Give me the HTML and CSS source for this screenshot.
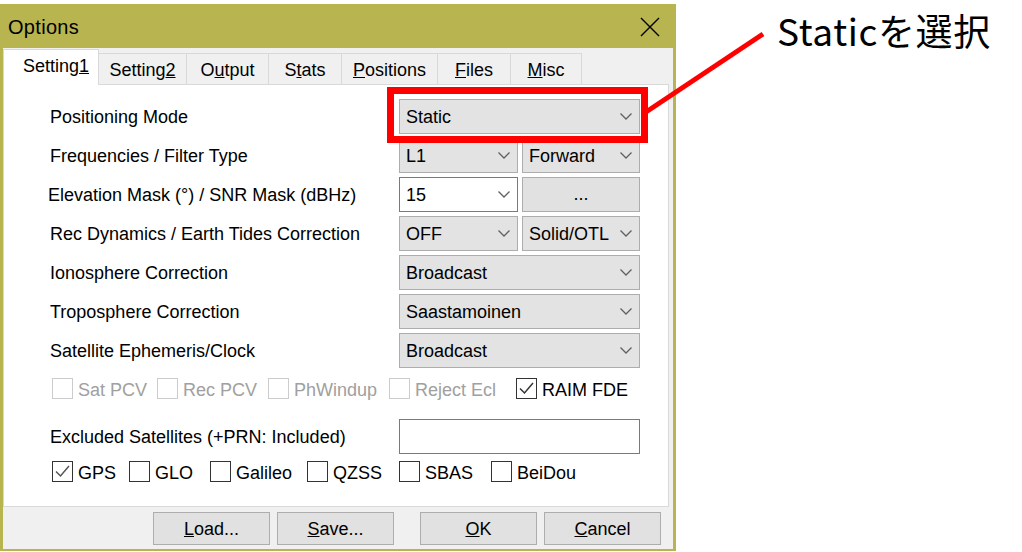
FILE: index.html
```html
<!DOCTYPE html>
<html>
<head>
<meta charset="utf-8">
<link rel="stylesheet" href="styles.css">
</head>
<body>
<div class="dialog">
  <div class="titlebar">
    <span class="title">Options</span>
    <svg class="close" width="20" height="20" viewBox="0 0 20 20"><path d="M1 1 L19 19 M19 1 L1 19" stroke="#000" stroke-width="1.4" fill="none"/></svg>
  </div>
  <div class="client">
    <div class="tabs">
      <div class="tab tab-sel">Setting<u>1</u></div>
      <div class="tab">Setting<u>2</u></div>
      <div class="tab">O<u>u</u>tput</div>
      <div class="tab">S<u>t</u>ats</div>
      <div class="tab"><u>P</u>ositions</div>
      <div class="tab"><u>F</u>iles</div>
      <div class="tab"><u>M</u>isc</div>
    </div>
    <div class="page">
      <div class="grid">
        <div class="label">Positioning Mode</div>
        <div class="combo">Static<svg class="chev" width="12" height="7" viewBox="0 0 12 7"><polyline points="0.5,0.5 6,6 11.5,0.5"/></svg></div>

        <div class="label">Frequencies / Filter Type</div>
        <div class="pair">
          <div class="combo">L1<svg class="chev" width="12" height="7" viewBox="0 0 12 7"><polyline points="0.5,0.5 6,6 11.5,0.5"/></svg></div>
          <div class="combo">Forward<svg class="chev" width="12" height="7" viewBox="0 0 12 7"><polyline points="0.5,0.5 6,6 11.5,0.5"/></svg></div>
        </div>

        <div class="label label-shift">Elevation Mask (&deg;) / SNR Mask (dBHz)</div>
        <div class="pair">
          <div class="combo combo-edit">15<svg class="chev" width="12" height="7" viewBox="0 0 12 7"><polyline points="0.5,0.5 6,6 11.5,0.5"/></svg></div>
          <div class="btn btn-dots">...</div>
        </div>

        <div class="label">Rec Dynamics / Earth Tides Correction</div>
        <div class="pair">
          <div class="combo">OFF<svg class="chev" width="12" height="7" viewBox="0 0 12 7"><polyline points="0.5,0.5 6,6 11.5,0.5"/></svg></div>
          <div class="combo">Solid/OTL<svg class="chev" width="12" height="7" viewBox="0 0 12 7"><polyline points="0.5,0.5 6,6 11.5,0.5"/></svg></div>
        </div>

        <div class="label">Ionosphere Correction</div>
        <div class="combo">Broadcast<svg class="chev" width="12" height="7" viewBox="0 0 12 7"><polyline points="0.5,0.5 6,6 11.5,0.5"/></svg></div>

        <div class="label">Troposphere Correction</div>
        <div class="combo">Saastamoinen<svg class="chev" width="12" height="7" viewBox="0 0 12 7"><polyline points="0.5,0.5 6,6 11.5,0.5"/></svg></div>

        <div class="label">Satellite Ephemeris/Clock</div>
        <div class="combo">Broadcast<svg class="chev" width="12" height="7" viewBox="0 0 12 7"><polyline points="0.5,0.5 6,6 11.5,0.5"/></svg></div>
      </div>

      <div class="checkrow checkrow-opts">
        <div class="check disabled"><span class="box"></span><span class="check-text">Sat PCV</span></div>
        <div class="check disabled"><span class="box"></span><span class="check-text">Rec PCV</span></div>
        <div class="check disabled"><span class="box"></span><span class="check-text">PhWindup</span></div>
        <div class="check disabled"><span class="box"></span><span class="check-text">Reject Ecl</span></div>
        <div class="check"><span class="box"><svg width="19" height="19" viewBox="0 0 19 19"><polyline points="3,9.5 7.5,14 16,4" class="tick"/></svg></span><span class="check-text">RAIM FDE</span></div>
      </div>

      <div class="excl">
        <div class="label">Excluded Satellites (+PRN: Included)</div>
        <div class="textbox"></div>
      </div>

      <div class="checkrow checkrow-sys">
        <div class="check"><span class="box"><svg width="19" height="19" viewBox="0 0 19 19"><polyline points="3,9.5 7.5,14 16,4" class="tick tick-light"/></svg></span><span class="check-text">GPS</span></div>
        <div class="check"><span class="box"></span><span class="check-text">GLO</span></div>
        <div class="check"><span class="box"></span><span class="check-text">Galileo</span></div>
        <div class="check"><span class="box"></span><span class="check-text">QZSS</span></div>
        <div class="check"><span class="box"></span><span class="check-text">SBAS</span></div>
        <div class="check"><span class="box"></span><span class="check-text">BeiDou</span></div>
      </div>
    </div>
    <div class="footer">
      <div class="btn btn-foot"><u>L</u>oad...</div>
      <div class="btn btn-foot"><u>S</u>ave...</div>
      <div class="btn btn-foot btn-ok"><u>O</u>K</div>
      <div class="btn btn-foot"><u>C</u>ancel</div>
    </div>
  </div>
</div>

<div class="highlight"></div>
<svg class="pointer" width="1022" height="552" viewBox="0 0 1022 552"><line x1="646" y1="112" x2="763" y2="34" stroke="#ff0000" stroke-width="5"/></svg>
<div class="note">Staticを選択</div>
</body>
</html>
```
FILE: styles.css
```css
html, body {
  margin: 0;
  padding: 0;
}
body {
  width: 1022px;
  height: 552px;
  background: #ffffff;
  position: relative;
  overflow: hidden;
  font-family: "Liberation Sans", Arial, sans-serif;
  font-size: 18px;
  color: #000;
}
.dialog {
  margin-top: 4px;
  width: 676px;
  height: 547px;
  box-sizing: border-box;
  background: #b8b44f;
  padding: 0 3px 2px 3px;
  display: flex;
  flex-direction: column;
}
.titlebar {
  height: 44px;
  flex: none;
  display: flex;
  align-items: center;
  padding-left: 5px;
}
.title {
  font-size: 20px;
  color: #000;
  letter-spacing: 0.3px;
  padding-top: 2px;
}
.close {
  margin-left: auto;
  margin-right: 13px;
  margin-top: 1px;
}
.client {
  flex: 1;
  background: #f0f0f0;
  display: flex;
  flex-direction: column;
}
.tabs {
  height: 36px;
  flex: none;
  display: flex;
  align-items: flex-end;
  position: relative;
  z-index: 2;
}
.tab {
  height: 31px;
  box-sizing: border-box;
  border: 1px solid #d9d9d9;
  border-left: none;
  border-bottom: none;
  background: #f0f0f0;
  display: flex;
  align-items: center;
  justify-content: center;
  padding-top: 3px;
}
.tab-sel {
  height: 36px;
  background: #ffffff;
  border-left: 1px solid #d9d9d9;
  margin-bottom: -1px;
  padding-top: 0;
  padding-bottom: 2px;
  padding-left: 10px;
}
.tab:nth-child(1) { width: 96px; }
.tab:nth-child(2) { width: 88px; }
.tab:nth-child(3) { width: 82px; }
.tab:nth-child(4) { width: 73px; }
.tab:nth-child(5) { width: 96px; }
.tab:nth-child(6) { width: 73px; }
.tab:nth-child(7) { width: 71px; }
.page {
  height: 423px;
  flex: none;
  box-sizing: border-box;
  margin-right: 4px;
  background: #ffffff;
  border: 1px solid #d9d9d9;
  padding: 14px 0 0 46px;
  position: relative;
  z-index: 1;
}
.grid {
  display: grid;
  grid-template-columns: 349px 241px;
  grid-auto-rows: 35px;
  row-gap: 4px;
}
.label {
  display: flex;
  align-items: center;
  white-space: nowrap;
  padding-top: 2px;
}
.label-shift {
  margin-left: -2px;
}
.pair {
  display: grid;
  grid-template-columns: 119px 118px;
  column-gap: 4px;
}
.combo {
  box-sizing: border-box;
  height: 35px;
  background: #e3e3e3;
  border: 1px solid #adadad;
  display: flex;
  align-items: center;
  justify-content: space-between;
  padding: 2px 7px 0 6px;
  white-space: nowrap;
}
.combo .chev {
  margin-top: -2px;
}
.combo-edit {
  background: #ffffff;
  border-color: #7a7a7a;
}
.chev {
  flex: none;
}
.chev polyline {
  fill: none;
  stroke: #606060;
  stroke-width: 1.3;
}
.btn {
  box-sizing: border-box;
  background: #e1e1e1;
  border: 1px solid #adadad;
  display: flex;
  align-items: center;
  justify-content: center;
}
.btn-dots {
  height: 35px;
}
.checkrow {
  display: flex;
  align-items: center;
  height: 21px;
  margin-left: 2px;
}
.checkrow-opts { margin-top: 10px; }
.checkrow-sys { margin-top: 7px; }
.check {
  display: flex;
  align-items: center;
  gap: 5px;
  white-space: nowrap;
  flex: none;
  height: 21px;
}
.check-text {
  padding-top: 3px;
  line-height: 21px;
}
.box {
  width: 21px;
  height: 21px;
  box-sizing: border-box;
  border: 1px solid #333333;
  background: #ffffff;
  display: flex;
  align-items: center;
  justify-content: center;
  flex: none;
}
.tick {
  fill: none;
  stroke: #333;
  stroke-width: 1.5;
}
.tick-light {
  stroke: #555;
}
.check.disabled {
  color: #a0a0a0;
}
.check.disabled .box {
  border-color: #cccccc;
}
.checkrow-opts .check:nth-child(1) { width: 105px; }
.checkrow-opts .check:nth-child(2) { width: 111px; }
.checkrow-opts .check:nth-child(3) { width: 121px; }
.checkrow-opts .check:nth-child(4) { width: 127px; }
.checkrow-sys .check:nth-child(1) { width: 77px; }
.checkrow-sys .check:nth-child(2) { width: 81px; }
.checkrow-sys .check:nth-child(3) { width: 97px; }
.checkrow-sys .check:nth-child(4) { width: 92px; }
.checkrow-sys .check:nth-child(5) { width: 92px; }
.excl {
  display: grid;
  grid-template-columns: 349px 241px;
  height: 35px;
  margin-top: 20px;
}
.textbox {
  box-sizing: border-box;
  height: 35px;
  background: #ffffff;
  border: 1px solid #7a7a7a;
}
.footer {
  flex: 1;
  display: flex;
  align-items: flex-start;
  padding-top: 5px;
  padding-left: 150px;
  gap: 7px;
}
.btn-foot {
  width: 117px;
  height: 33px;
  padding-top: 1px;
}
.btn-ok {
  margin-left: 19px;
}
.highlight {
  position: absolute;
  z-index: 10;
  left: 387px;
  top: 87px;
  width: 261px;
  height: 56px;
  box-sizing: border-box;
  border: 7px solid #ff0000;
}
.pointer {
  position: absolute;
  z-index: 10;
  left: 0;
  top: 0;
}
.note {
  position: absolute;
  z-index: 10;
  left: 777px;
  top: 3px;
  font-family: "Noto Sans CJK JP", sans-serif;
  font-size: 37px;
  letter-spacing: 0.6px;
  color: #000;
  white-space: nowrap;
}
```
